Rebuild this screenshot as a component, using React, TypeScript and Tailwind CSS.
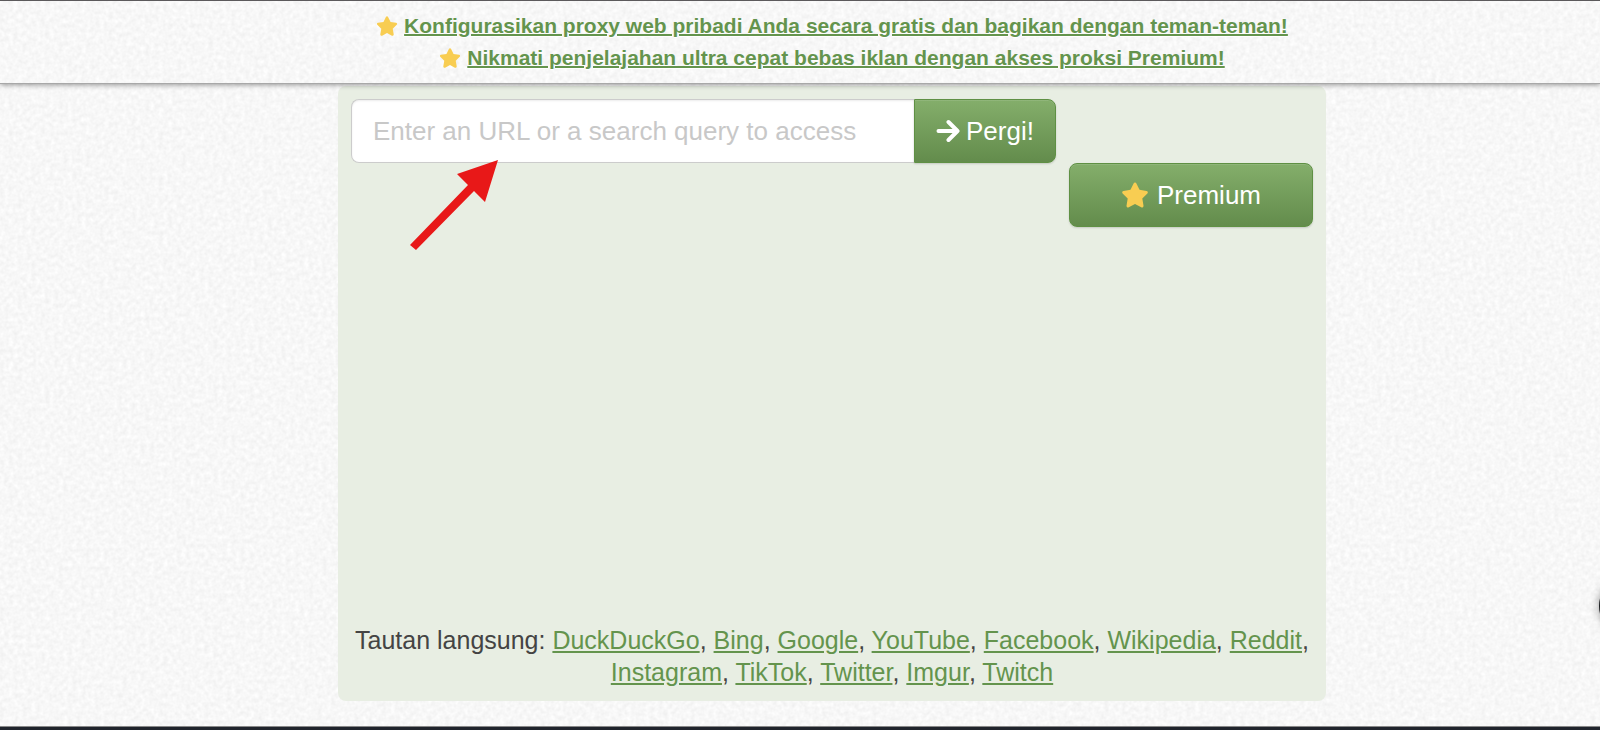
import { useState } from "react";
import { FaStar } from "react-icons/fa6";

const promos = [
  { href: "#proxy", text: "Konfigurasikan proxy web pribadi Anda secara gratis dan bagikan dengan teman-teman!" },
  { href: "#premium", text: "Nikmati penjelajahan ultra cepat bebas iklan dengan akses proksi Premium!" },
];

const quickLinks = [
  "DuckDuckGo",
  "Bing",
  "Google",
  "YouTube",
  "Facebook",
  "Wikipedia",
  "Reddit",
  "Instagram",
  "TikTok",
  "Twitter",
  "Imgur",
  "Twitch",
];

// paper grain behind the whole page
function PaperTexture() {
  return (
    <svg className="absolute inset-0 -z-10 h-full w-full" aria-hidden="true">
      <filter id="paper" x="0" y="0" width="100%" height="100%" colorInterpolationFilters="sRGB">
        <feTurbulence type="fractalNoise" baseFrequency="0.22" numOctaves="2" seed="4" stitchTiles="stitch" />
        <feColorMatrix values="0.08 0 0 0 0.93  0.08 0 0 0 0.93  0.08 0 0 0 0.93  0 0 0 0 1" />
      </filter>
      <rect width="100%" height="100%" filter="url(#paper)" />
    </svg>
  );
}

function PromoBar() {
  return (
    <header className="relative z-10 border-t border-b border-t-[#5c5a5c] border-b-[#a8a8a8] py-[9px] pl-16 shadow-[0_1px_5px_rgba(0,0,0,0.4)]">
      <PaperTexture />
      <ul className="text-center text-[21px] leading-8 font-bold [text-shadow:0_1px_0_#fff]">
        {promos.map((p) => (
          <li key={p.href} className="flex items-center justify-center gap-1.5">
            <FaStar className="size-[22px] text-[#f8cd52]" />
            <a href={p.href} className="text-[#64944d] underline decoration-2">
              {p.text}
            </a>
          </li>
        ))}
      </ul>
    </header>
  );
}

function ArrowIcon() {
  return (
    <svg className="h-6 w-6" viewBox="0 0 24 24" fill="none" stroke="currentColor" strokeWidth="4" strokeLinecap="round" strokeLinejoin="round" aria-hidden="true">
      <path d="M2.5 12H21M12.5 3 21.5 12 12.5 21" />
    </svg>
  );
}

function SearchForm() {
  const [url, setUrl] = useState("");
  return (
    <form className="flex h-16 w-[705px] max-w-full text-[26px]" onSubmit={(e) => e.preventDefault()}>
      <input
        type="text"
        aria-label="URL"
        value={url}
        onChange={(e) => setUrl(e.target.value)}
        placeholder="Enter an URL or a search query to access"
        className="min-w-0 flex-1 rounded-l-lg border border-r-0 border-[#ccc] bg-white px-[21px] text-[#444] shadow-[inset_0_1px_2px_rgba(0,0,0,0.08)] placeholder:text-[#c8c8c8]"
      />
      <button
        type="submit"
        className="flex w-[142px] items-center justify-center gap-1.5 rounded-r-lg border border-[#5f9044] bg-linear-to-b from-[#84ae6b] to-[#638c4c] text-white shadow-[inset_0_1px_0_rgba(255,255,255,0.1),0_1px_2px_rgba(0,0,0,0.15)]"
      >
        <ArrowIcon />
        Pergi!
      </button>
    </form>
  );
}

// marker pointing at the address field
function Pointer() {
  return (
    <svg className="absolute top-[61px] left-[59px] h-[92px] w-[90px]" viewBox="0 0 90 92" aria-hidden="true">
      <path d="M88 0 47 14 58 25 0 85 6 90 64 31 75 42Z" fill="#e81818" />
    </svg>
  );
}

export default function App() {
  return (
    <div className="relative isolate flex min-h-screen flex-col overflow-hidden font-['Liberation_Sans',Arial,sans-serif]">
      <PaperTexture />
      <PromoBar />
      <div className="flex flex-1 flex-col pt-0.5 pb-[25px] pl-16">
        <main className="mx-auto flex w-full max-w-[988px] flex-1 flex-col rounded-lg bg-[#e8eee3] p-[13px]">
          <div className="relative">
            <SearchForm />
            <Pointer />
          </div>
          <button
            type="button"
            className="flex h-16 w-[244px] items-center justify-center gap-2 self-end rounded-lg border border-[#5f9044] bg-linear-to-b from-[#84ae6b] to-[#638c4c] text-[26px] text-white shadow-[inset_0_1px_0_rgba(255,255,255,0.1),0_1px_2px_rgba(0,0,0,0.15)]"
          >
            <FaStar className="size-7 text-[#f8cd52]" />
            Premium
          </button>
          <p className="mt-auto text-center text-[25px] leading-8 text-[#444]">
            Tautan langsung:{" "}
            {quickLinks.map((name, i) => (
              <span key={name}>
                {i > 0 && ", "}
                <a href={`#${name.toLowerCase()}`} className="text-[#64944d] underline">
                  {name}
                </a>
              </span>
            ))}
          </p>
        </main>
      </div>
      <button
        type="button"
        aria-label="Menu"
        className="absolute -right-[59px] bottom-[94px] size-[60px] rounded-full bg-[#1c1e20] shadow-[0_0_10px_rgba(0,0,0,0.4)]"
      />
      <footer className="h-1 border-t border-[#888] bg-[#20242c]" />
    </div>
  );
}
